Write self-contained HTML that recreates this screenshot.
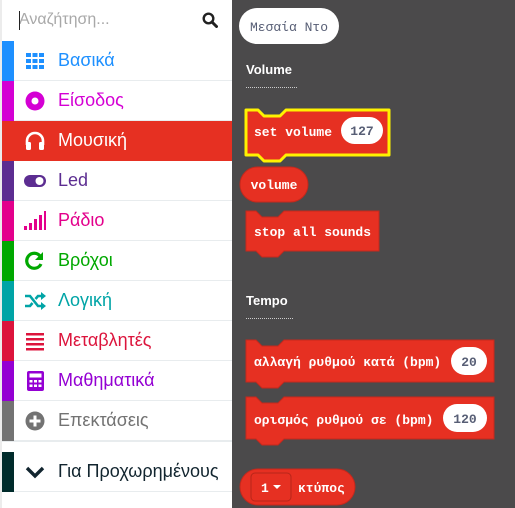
<!DOCTYPE html>
<html><head><meta charset="utf-8"><style>
*{margin:0;padding:0;box-sizing:border-box}
body{width:515px;height:508px;overflow:hidden;background:#4b4a4b;font-family:"Liberation Sans",sans-serif;position:relative}
#side{position:absolute;left:0;top:0;width:232px;height:508px;background:#fff;border-left:2px solid #ececec}
.search{position:absolute;left:0;top:0;width:230px;height:41px}
.search .ph{position:absolute;left:17px;top:11px;font-size:16px;color:#a8a8a8}
.search .cur{position:absolute;left:17px;top:11px;width:1px;height:19px;background:#222}
.row{position:absolute;left:0;width:230px;height:40px;border-bottom:1px solid #e8ecee}
.row .strip{position:absolute;left:0;top:0;width:12px;height:40px}
.row .ic{position:absolute;left:22px;top:10px;width:22px;height:20px}
.row .t{position:absolute;left:56px;top:9px;font-size:18px}
#fly{position:absolute;left:232px;top:0}
#fly text{font-weight:bold}
</style></head><body>
<div id="side">
 <div class="search"><span class="ph">Αναζήτηση...</span><span class="cur"></span>
 <svg style="position:absolute;left:200px;top:12px" width="16" height="16" viewBox="0 0 16 16"><circle cx="6.5" cy="6.5" r="4.8" fill="none" stroke="#222" stroke-width="2.4"/><path d="M10 10l4.5 4.5" stroke="#222" stroke-width="3" stroke-linecap="round"/></svg></div>

 <div class="row" style="top:41px"><div class="strip" style="background:#1e90ff"></div>
 <svg class="ic" viewBox="0 0 22 20"><g fill="#1e90ff"><rect x="2" y="2" width="5" height="4"/><rect x="8.5" y="2" width="5" height="4"/><rect x="15" y="2" width="5" height="4"/><rect x="2" y="8" width="5" height="4"/><rect x="8.5" y="8" width="5" height="4"/><rect x="15" y="8" width="5" height="4"/><rect x="2" y="14" width="5" height="4"/><rect x="8.5" y="14" width="5" height="4"/><rect x="15" y="14" width="5" height="4"/></g></svg>
 <span class="t" style="color:#1e90ff">Βασικά</span></div>

 <div class="row" style="top:81px"><div class="strip" style="background:#d400d4"></div>
 <svg class="ic" viewBox="0 0 22 20"><circle cx="11" cy="10" r="9.5" fill="#d400d4"/><circle cx="11" cy="10" r="3.5" fill="#fff"/></svg>
 <span class="t" style="color:#d400d4">Είσοδος</span></div>

 <div class="row" style="top:121px;background:#e63022;border-bottom-color:#e63022"><div class="strip" style="background:#e63022"></div>
 <svg class="ic" viewBox="0 0 22 20"><path d="M3 14V10a8 8 0 0 1 16 0v4" fill="none" stroke="#fff" stroke-width="2.6"/><rect x="2" y="11" width="5" height="8" rx="1.5" fill="#fff"/><rect x="15" y="11" width="5" height="8" rx="1.5" fill="#fff"/></svg>
 <span class="t" style="color:#fff">Μουσική</span></div>

 <div class="row" style="top:161px"><div class="strip" style="background:#5c2d91"></div>
 <svg class="ic" viewBox="0 0 22 20"><rect x="0" y="4" width="22" height="12" rx="6" fill="#5c2d91"/><circle cx="15.5" cy="10" r="4" fill="#fff"/></svg>
 <span class="t" style="color:#5c2d91">Led</span></div>

 <div class="row" style="top:201px"><div class="strip" style="background:#e3008c"></div>
 <svg class="ic" viewBox="0 0 22 20"><g fill="#e3008c"><rect x="0" y="15" width="3" height="4"/><rect x="5" y="12" width="3" height="7"/><rect x="10" y="8" width="3" height="11"/><rect x="15" y="4" width="3" height="15"/><rect x="20" y="0" width="2" height="19"/></g></svg>
 <span class="t" style="color:#e3008c">Ράδιο</span></div>

 <div class="row" style="top:241px"><div class="strip" style="background:#00a800"></div>
 <svg class="ic" viewBox="0 0 22 20"><path d="M17 13a7.5 7.5 0 1 1 -1 -8" fill="none" stroke="#00a800" stroke-width="3.2"/><path d="M19 1v8h-8z" fill="#00a800"/></svg>
 <span class="t" style="color:#00a800">Βρόχοι</span></div>

 <div class="row" style="top:281px"><div class="strip" style="background:#00a4a6"></div>
 <svg class="ic" viewBox="0 0 22 20"><path d="M1 5h5l8 10h4M1 15h5l2.5-3M11.5 8l2.5-3h4" fill="none" stroke="#00a4a6" stroke-width="2.6"/><path d="M17 1l5 4-5 4zM17 11l5 4-5 4z" fill="#00a4a6"/></svg>
 <span class="t" style="color:#00a4a6">Λογική</span></div>

 <div class="row" style="top:321px"><div class="strip" style="background:#dc143c"></div>
 <svg class="ic" viewBox="0 0 22 20"><g fill="#dc143c"><rect x="2" y="2" width="18" height="2.5"/><rect x="2" y="7" width="18" height="2.5"/><rect x="2" y="12" width="18" height="2.5"/><rect x="2" y="17" width="18" height="2.5"/></g></svg>
 <span class="t" style="color:#dc143c">Μεταβλητές</span></div>

 <div class="row" style="top:361px"><div class="strip" style="background:#9400d3"></div>
 <svg class="ic" viewBox="0 0 22 20"><rect x="3" y="0" width="17" height="20" rx="2" fill="#9400d3"/><rect x="5.5" y="2.5" width="12" height="4" fill="#fff"/><g fill="#fff"><rect x="5.5" y="9" width="3" height="2.5"/><rect x="10" y="9" width="3" height="2.5"/><rect x="14.5" y="9" width="3" height="2.5"/><rect x="5.5" y="13.5" width="3" height="2.5"/><rect x="10" y="13.5" width="3" height="2.5"/><rect x="14.5" y="13.5" width="3" height="2.5"/></g></svg>
 <span class="t" style="color:#9400d3">Μαθηματικά</span></div>

 <div class="row" style="top:401px"><div class="strip" style="background:#737373"></div>
 <svg class="ic" viewBox="0 0 22 20"><circle cx="11" cy="10" r="9.5" fill="#737373"/><path d="M11 4.5v11M5.5 10h11" stroke="#fff" stroke-width="3"/></svg>
 <span class="t" style="color:#737373">Επεκτάσεις</span></div>

 <div class="row" style="top:441px;height:11px;border-top:1px solid #e8ecee;border-bottom:none"></div>
 <div class="row" style="top:452px"><div class="strip" style="background:#002b2b"></div>
 <svg class="ic" viewBox="0 0 22 20"><path d="M3 6l8 8 8-8" fill="none" stroke="#12252f" stroke-width="3.4"/></svg>
 <span class="t" style="color:#12252f">Για Προχωρημένους</span></div>
</div>

<svg id="fly" width="283" height="508" viewBox="232 0 283 508">
 <rect x="239" y="8" width="100" height="36" rx="18" fill="#fff"/>
 <text x="289" y="31" text-anchor="middle" fill="#575e75" font-family="Liberation Mono" font-size="13" style="font-weight:normal">Μεσαία Ντο</text>

 <text x="246" y="74" fill="#fff" font-family="Liberation Sans" font-size="13">Volume</text>
 <line x1="246" y1="87.5" x2="297" y2="87.5" stroke="#ccc" stroke-width="1" stroke-dasharray="1,1"/>

 <path d="M246 110h12l6 6h16l6-6h103v45h-103l-6 6h-16l-6-6h-12z" fill="#e63022" stroke="#fff200" stroke-width="3" stroke-linejoin="round"/>
 <text x="254" y="136" fill="#fff" font-family="Liberation Mono" font-size="13">set volume</text>
 <rect x="341" y="117" width="42" height="27" rx="13.5" fill="#fff"/>
 <text x="362" y="135" text-anchor="middle" fill="#575e75" font-family="Liberation Mono" font-size="13">127</text>

 <rect x="240" y="167" width="68" height="35" rx="17.5" fill="#e63022" stroke="#c4281c"/>
 <text x="274" y="189" text-anchor="middle" fill="#fff" font-family="Liberation Mono" font-size="13">volume</text>

 <path d="M246 211h10l6 6h16l6-6h95v40h-95l-6 6h-16l-6-6h-10z" fill="#e63022" stroke="#c4281c"/>
 <text x="254" y="236" fill="#fff" font-family="Liberation Mono" font-size="13">stop all sounds</text>

 <text x="246" y="305" fill="#fff" font-family="Liberation Sans" font-size="13">Tempo</text>
 <line x1="246" y1="318.5" x2="293" y2="318.5" stroke="#ccc" stroke-width="1" stroke-dasharray="1,1"/>

 <path d="M246 340h10l6 6h16l6-6h210v42h-210l-6 6h-16l-6-6h-10z" fill="#e63022" stroke="#c4281c"/>
 <text x="254" y="366" fill="#fff" font-family="Liberation Mono" font-size="13">αλλαγή ρυθμού κατά (bpm)</text>
 <rect x="451" y="347" width="36" height="28" rx="14" fill="#fff"/>
 <text x="469" y="366" text-anchor="middle" fill="#575e75" font-family="Liberation Mono" font-size="13">20</text>

 <path d="M246 397h10l6 6h16l6-6h210v42h-210l-6 6h-16l-6-6h-10z" fill="#e63022" stroke="#c4281c"/>
 <text x="254" y="424" fill="#fff" font-family="Liberation Mono" font-size="13">ορισμός ρυθμού σε (bpm)</text>
 <rect x="443" y="404" width="44" height="28" rx="14" fill="#fff"/>
 <text x="465" y="423" text-anchor="middle" fill="#575e75" font-family="Liberation Mono" font-size="13">120</text>

 <rect x="240" y="469" width="115" height="36" rx="18" fill="#e63022" stroke="#c4281c"/>
 <rect x="251" y="473" width="40" height="28" rx="4" fill="#e63022" stroke="#b8261a"/>
 <text x="261" y="492" fill="#fff" font-family="Liberation Mono" font-size="13">1</text>
 <path d="M273 485h8l-4 4z" fill="#fff"/>
 <text x="298" y="492" fill="#fff" font-family="Liberation Mono" font-size="13">κτύπος</text>
</svg>
</body></html>
